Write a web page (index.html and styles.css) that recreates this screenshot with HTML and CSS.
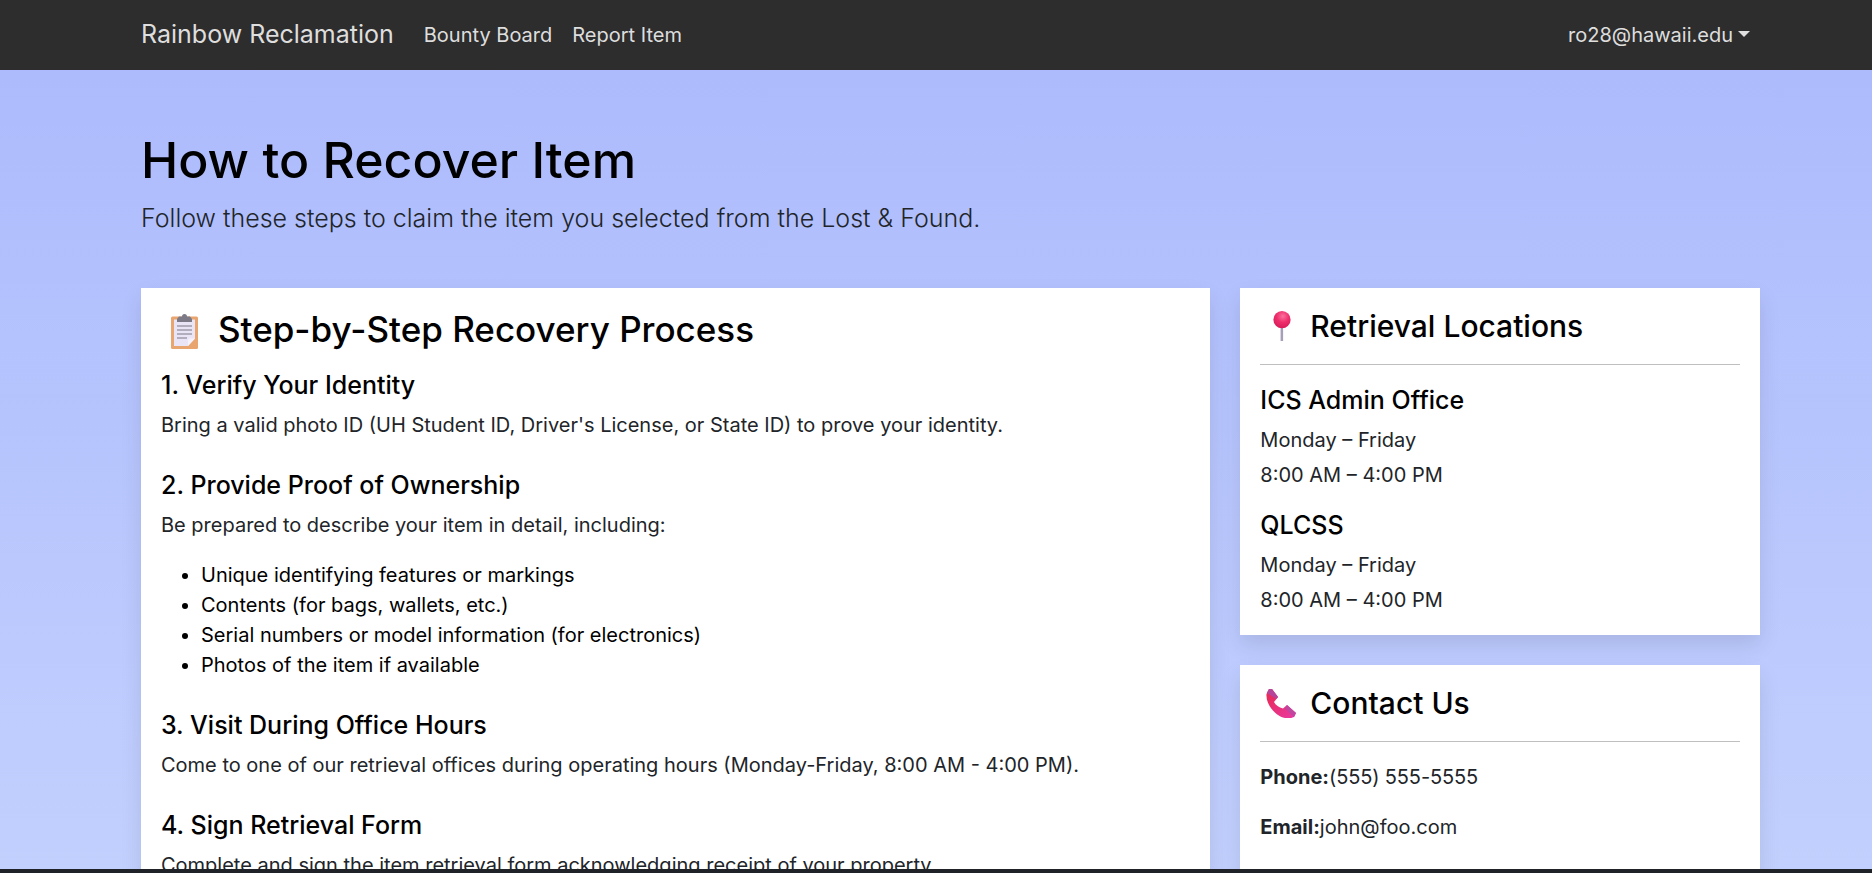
FILE: index.html
```html
<!DOCTYPE html>
<html lang="en">
<head>
<meta charset="utf-8">
<title>How to Recover Item</title>
<link rel="stylesheet" href="styles.css">
</head>
<body>
<nav class="navbar">
  <a class="brand" href="#">Rainbow Reclamation</a>
  <a class="nav-link" href="#">Bounty Board</a>
  <a class="nav-link" href="#">Report Item</a>
  <a class="nav-link nav-user" href="#">ro28@hawaii.edu<span class="caret"></span></a>
</nav>
<main class="page">
  <header class="hero">
    <h1>How to Recover Item</h1>
    <p class="lead">Follow these steps to claim the item you selected from the Lost &amp; Found.</p>
  </header>
  <div class="columns">
    <section class="card main-card">
      <h2 class="process-title">
        <svg class="emoji-clip" viewBox="0 0 27 35" aria-hidden="true">
          <rect x="0" y="2.5" width="27" height="32.5" rx="1.5" fill="#e8a56f"/>
          <path d="M3 5.5h21v19l-7 7.5H3z" fill="#e9e4f6"/>
          <path d="M17 32l7-7.500h-6l-1 1.500z" fill="#f6f2fb"/>
          <path d="M6 12h15M6 16h15M6 20h15M6 24h10" stroke="#a09cac" stroke-width="1.3"/>
          <path d="M13.500 0a2.500 2.500 0 0 1 2.500 2.500h3l2 2.500v3H6V5l2-2.500h3A2.500 2.500 0 0 1 13.500 0z" fill="#7d7a88"/>
        </svg>
        <span>Step-by-Step Recovery Process</span>
      </h2>
      <div class="step">
        <h3>1. Verify Your Identity</h3>
        <p>Bring a valid photo ID (UH Student ID, Driver's License, or State ID) to prove your identity.</p>
      </div>
      <div class="step">
        <h3>2. Provide Proof of Ownership</h3>
        <p>Be prepared to describe your item in detail, including:</p>
        <ul>
          <li>Unique identifying features or markings</li>
          <li>Contents (for bags, wallets, etc.)</li>
          <li>Serial numbers or model information (for electronics)</li>
          <li>Photos of the item if available</li>
        </ul>
      </div>
      <div class="step">
        <h3>3. Visit During Office Hours</h3>
        <p>Come to one of our retrieval offices during operating hours (Monday-Friday, 8:00 AM - 4:00 PM).</p>
      </div>
      <div class="step">
        <h3>4. Sign Retrieval Form</h3>
        <p>Complete and sign the item retrieval form acknowledging receipt of your property.</p>
      </div>
    </section>
    <aside class="side">
      <section class="card side-card">
        <h2 class="side-title">
          <svg class="emoji-pin" viewBox="0 0 18 30" aria-hidden="true">
            <defs><radialGradient id="pin" cx="0.55" cy="0.3" r="0.7"><stop offset="0" stop-color="#f9739f"/><stop offset="0.5" stop-color="#ef2f6d"/><stop offset="1" stop-color="#d81b5a"/></radialGradient></defs>
            <rect x="7.600" y="14" width="2.500" height="16" fill="#a79fb8"/>
            <circle cx="9" cy="8.700" r="8.600" fill="url(#pin)"/>
          </svg>
          <span>Retrieval Locations</span>
        </h2>
        <hr>
        <h4>ICS Admin Office</h4>
        <p class="hours-day">Monday – Friday</p>
        <p class="hours-time">8:00 AM – 4:00 PM</p>
        <h4>QLCSS</h4>
        <p class="hours-day">Monday – Friday</p>
        <p class="hours-last">8:00 AM – 4:00 PM</p>
      </section>
      <section class="card side-card">
        <h2 class="side-title">
          <svg class="emoji-phone" viewBox="0 0 30 30" aria-hidden="true">
            <defs><linearGradient id="ph" x1="0" y1="0" x2="1" y2="1"><stop offset="0" stop-color="#e8294f"/><stop offset="1" stop-color="#e93aa5"/></linearGradient></defs>
            <path d="M0.500 6 3 1h3l6 8-4 5c1.500 3 5 5.500 9 6.500l4-3.500 9 8-2 4c-3 1.500-6 1.500-9 1C10 28-0.500 17 0.500 6z" fill="url(#ph)"/>
            <path d="M0.800 5 3 1h3l6 8-1.500 2z" fill="#b5459a"/>
            <path d="M21 17l9 8-2 4-9-8.500z" fill="#c0479f"/>
          </svg>
          <span>Contact Us</span>
        </h2>
        <hr>
        <p class="contact"><strong>Phone:</strong><span class="phone-number">(555) 555-5555</span></p>
        <p class="contact"><strong>Email:</strong>john@foo.com</p>
      </section>
    </aside>
  </div>
</main>
<div class="bottom-edge"></div>
</body>
</html>
```
FILE: styles.css
```css
* { box-sizing: border-box; }
html, body { height: 873px; overflow: hidden; }
body {
  margin: 0;
  font-family: Inter, "Liberation Sans", sans-serif;
  font-size: 20px;
  line-height: 1.5;
  color: #212529;
  background: linear-gradient(180deg, #abb9fd 0%, #c2d0fe 100%);
}
.navbar {
  height: 70px;
  background: #2d2d2d;
  display: flex;
  align-items: center;
  padding: 0 112px 0 141px;
}
.navbar a { text-decoration: none; color: rgba(255,255,255,.85); }
.brand { font-size: 25px; margin-right: 20px; }
.nav-link { padding: 0 10px; }
.nav-user { margin-left: auto; display: flex; align-items: center; }
.caret {
  margin-left: 5px;
  margin-top: -2px;
  border-top: 6px solid rgba(255,255,255,.85);
  border-left: 6px solid transparent;
  border-right: 6px solid transparent;
}
.page { padding: 0 112px 0 141px; }
.hero { padding: 60px 0 50.500px; }
h1 { margin: 0 0 10px; font-size: 50px; font-weight: 500; line-height: 1.2; color: #000; }
.lead { margin: 0; font-size: 25px; font-weight: 300; }
.columns { display: flex; gap: 30px; align-items: flex-start; }
.card { background: #fff; box-shadow: 0 10px 20px rgba(0,0,0,.1); padding: 20px; }
.main-card { flex: 0 0 1069.330px; }
.side { flex: 0 0 519.670px; display: flex; flex-direction: column; gap: 30px; }
h2, h3, h4 { font-weight: 500; color: #000; margin: 0; line-height: 1.2; }
.process-title { display: flex; align-items: center; font-size: 35px; margin-bottom: 20px; }
.emoji-clip { width: 27px; height: 35px; margin: 4px 20px 0 10px; }
.step { margin-bottom: 30px; }
h3 { font-size: 25px; margin-bottom: 10px; }
.step p { margin: 0 0 20px; }
.step ul { margin: 0 0 20px; padding-left: 40px; color: #000; }
.side-title { display: flex; align-items: center; font-size: 30px; }
.emoji-pin { width: 18px; height: 30px; margin: 0 19px 0 13px; }
.emoji-phone { width: 30px; height: 30px; margin: 0 14px 0 6px; }
hr { border: 0; border-top: 1px solid #bfbfbf; margin: 20px 0; }
h4 { font-size: 25px; margin: 0 0 10px; }
.side-card p { margin: 0; }
.side-card .hours-day { margin-bottom: 5px; }
.side-card .hours-time, .side-card .contact { margin-bottom: 20px; }
.phone-number { letter-spacing: -.15px; }
.bottom-edge { position: fixed; left: 0; right: 0; bottom: 0; height: 4px; background: #1f2327; }
```
